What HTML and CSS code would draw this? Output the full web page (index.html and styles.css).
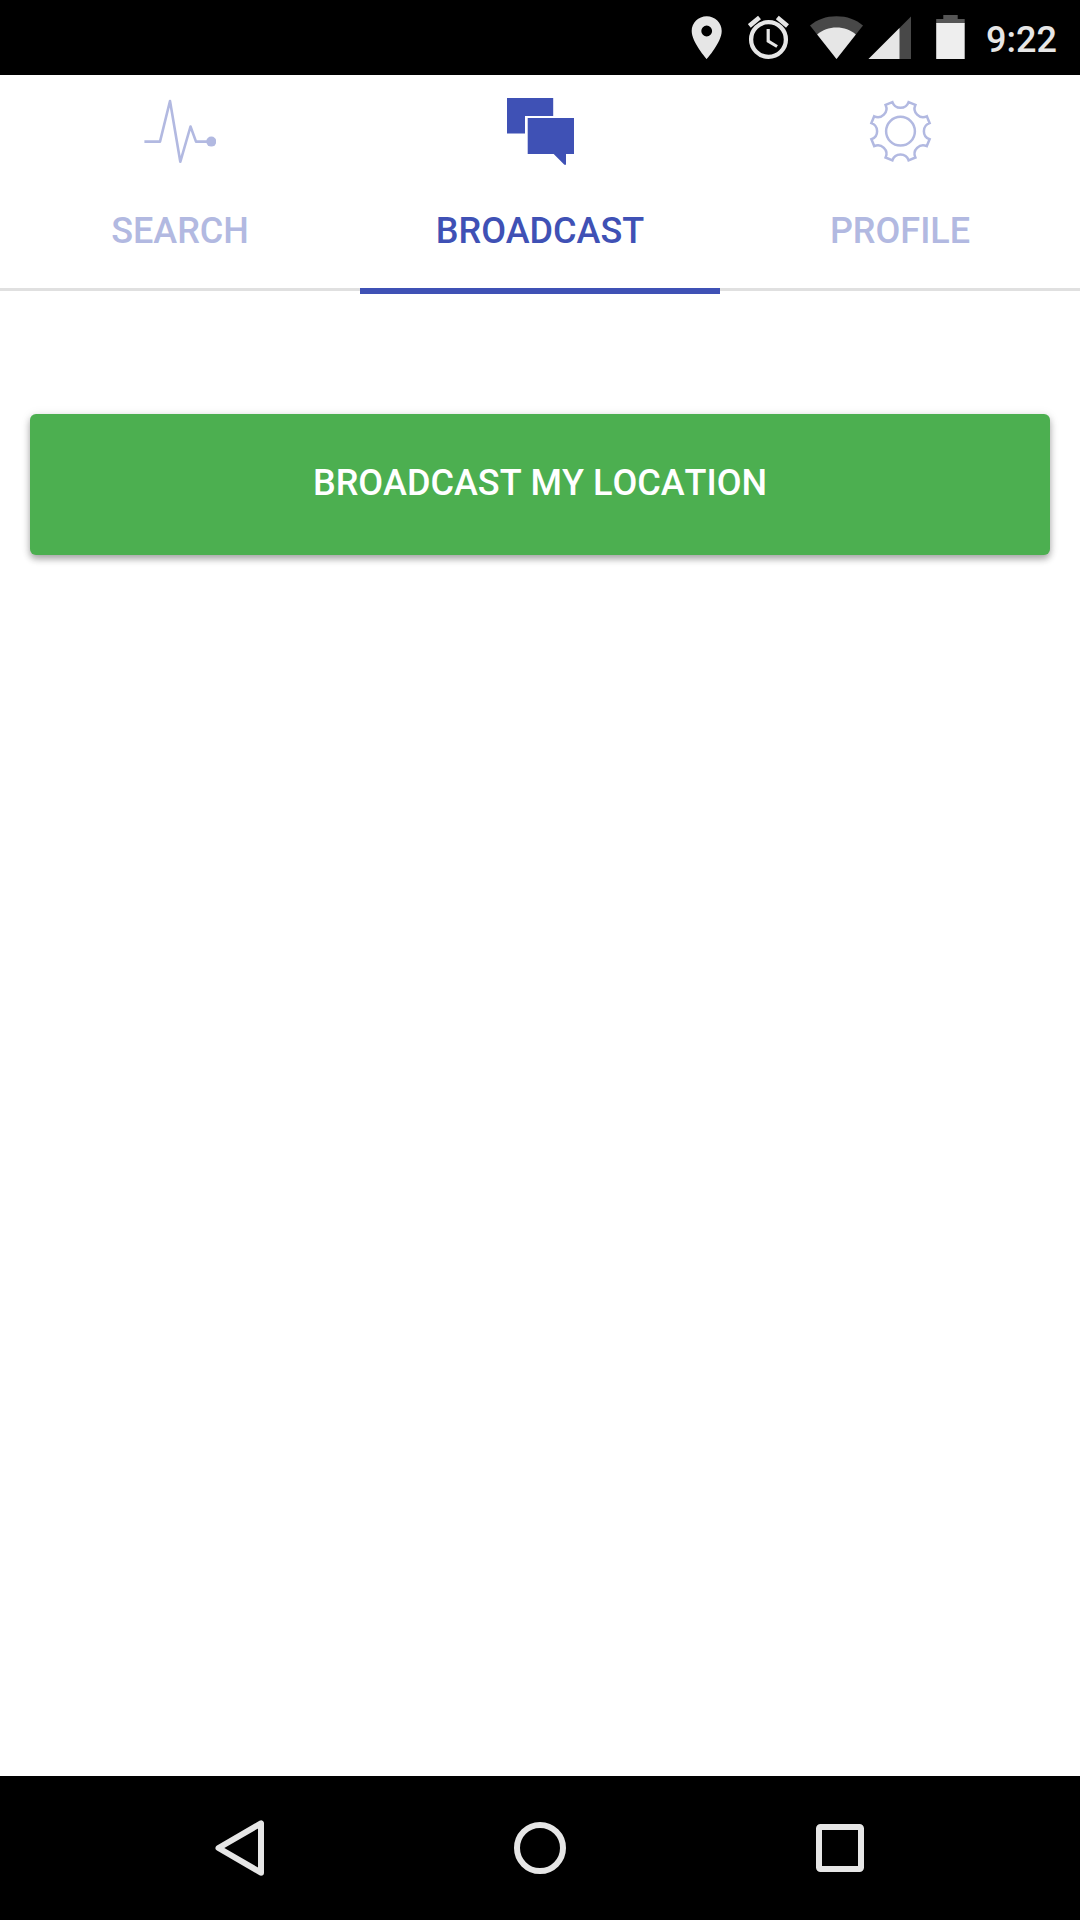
FILE: index.html
```html
<!DOCTYPE html>
<html lang="en">
<head>
    <meta charset="UTF-8">
    <meta name="viewport" content="width=device-width, initial-scale=1.0">
    <title>Broadcast</title>
    <link rel="stylesheet" href="styles.css">
</head>
<body>
    <header class="status-bar">
        <svg class="status-icon location" width="32" height="45" viewBox="0 0 32 45">
            <path fill-rule="evenodd" d="M15.700 1.200C7.400 1.200.7 7.800.7 16c0 11.300 15 28.100 15 28.100s15-16.800 15-28.100c0-8.200-6.700-14.800-15-14.800zM15.700 21.400a5.400 5.400 0 1 1 0-10.800 5.400 5.400 0 0 1 0 10.800z"></path>
        </svg>
        <svg class="status-icon alarm" width="43" height="45" viewBox="0 0 43 45" stroke="#e6e6e6">
            <circle cx="20.500" cy="24.500" r="17.400" stroke-width="4.300"></circle>
            <path d="M20.200 14v12.200l8.900 5.300" stroke-width="3.200"></path>
            <path d="M1.300 10.900l10.200-8.500M29.300 2.400l10.200 8.500" stroke-width="4.600"></path>
        </svg>
        <svg class="status-icon wifi" width="56" height="45" viewBox="0 0 56 45">
            <path class="dim" d="M27.500 44L1 10.600C8 4.500 17 1.200 27.500 1.200S47 4.500 54 10.600z"></path>
            <path d="M27.500 44L8.200 19.500C13.500 15 20 12.600 27.500 12.600S41.500 15 46.800 19.500z"></path>
        </svg>
        <svg class="status-icon signal" width="44" height="45" viewBox="0 0 44 45">
            <path class="dim" d="M.5 44L43 1.500V44z"></path>
            <path d="M.5 44L31.500 13v31z"></path>
        </svg>
        <svg class="status-icon battery" width="30" height="45" viewBox="0 0 30 45">
            <path class="cap" d="M7.300 0h14.400v4h7v4.500H.2V4h7.100z"></path>
            <path class="charge" d="M.2 8h28.500v36H.2z"></path>
        </svg>
        <span class="clock">9:22</span>
    </header>

    <nav class="tabs">
        <a class="tab" href="#">
            <svg class="tab-icon" viewBox="0 0 72 72" fill="none" stroke="currentColor" stroke-width="2.600" stroke-linejoin="round">
                <path d="M.4 46.600H16L26 6 36.300 66.800 46.500 31.500 52 46.600H64"></path>
                <circle cx="67.300" cy="46.600" r="5" fill="currentColor" stroke="none"></circle>
            </svg>
            <span class="tab-label">SEARCH</span>
        </a>
        <a class="tab active" href="#">
            <svg class="tab-icon" viewBox="0 0 72 72" fill="currentColor">
                <path d="M3 3h46.200v18H21v17.500H3z"></path>
                <path d="M23.700 23.100H70V59h-8v10.700h-1.600L49.700 59h-26z"></path>
            </svg>
            <span class="tab-label">BROADCAST</span>
        </a>
        <a class="tab" href="#">
            <svg class="tab-icon" viewBox="-36.500 -36.200 72 72" fill="none" stroke="currentColor" stroke-width="2.500">
                <path d="M-8.100-29.100A8.600 8.600 0 0 0 8.100-29.100L14.900-26.300A8.600 8.600 0 0 0 26.300-14.900L29.100-8.100A8.600 8.600 0 0 0 29.100 8.100L26.300 14.900A8.600 8.600 0 0 0 14.900 26.300L8.100 29.100A8.600 8.600 0 0 0-8.100 29.100L-14.900 26.300A8.600 8.600 0 0 0-26.300 14.900L-29.100 8.100A8.600 8.600 0 0 0-29.100-8.100L-26.300-14.900A8.600 8.600 0 0 0-14.900-26.300z"></path>
                <circle r="14.400"></circle>
            </svg>
            <span class="tab-label">PROFILE</span>
        </a>
    </nav>

    <main class="content">
        <button class="broadcast-button">BROADCAST MY LOCATION</button>
    </main>

    <footer class="nav-bar">
        <svg class="nav-icon" viewBox="0 0 60 60">
            <path d="M51 5.300v49.400L8.500 30z"></path>
        </svg>
        <svg class="nav-icon" viewBox="0 0 60 60">
            <circle cx="30" cy="30" r="23"></circle>
        </svg>
        <svg class="nav-icon" viewBox="0 0 60 60">
            <rect x="9" y="9" width="42" height="42" rx="1.500"></rect>
        </svg>
    </footer>
</body>
</html>
```

FILE: styles.css
```css
* {
    box-sizing: border-box;
}

body {
    font-family: Roboto, 'Noto Sans', sans-serif;
    margin: 0;
    height: 1920px;
    display: flex;
    flex-direction: column;
    background-color: #fff;
}

.status-bar {
    display: flex;
    align-items: center;
    justify-content: flex-end;
    height: 75px;
    padding-right: 23px;
    background-color: #000;
    color: #e6e6e6;
}

.status-icon {
    fill: #e6e6e6;
}

.status-icon .dim {
    fill: #484848;
}

.status-icon .cap {
    fill: #555;
}

.status-icon .charge {
    fill: #eee;
}

.alarm {
    fill: none;
    margin-left: 25px;
}

.wifi {
    margin-left: 18px;
}

.signal {
    margin-left: 3px;
}

.battery {
    margin-left: 24px;
}

.clock {
    width: 71px;
    margin-left: 20px;
    padding-top: 5px;
    font-size: 36px;
    font-weight: 500;
    line-height: 42px;
    white-space: nowrap;
}

.tabs {
    display: flex;
    height: 219px;
}

.tab {
    flex: 1;
    display: flex;
    flex-direction: column;
    align-items: center;
    height: 216px;
    padding-top: 20px;
    border-bottom: 3px solid #e0e0e0;
    color: #b2b9e1;
    text-decoration: none;
}

.tab.active {
    height: 219px;
    border-bottom: 6px solid #3f51b5;
    color: #3f51b5;
}

.tab-icon {
    width: 72px;
    height: 72px;
}

.tab-label {
    margin-top: 43px;
    font-size: 36px;
    font-weight: 500;
    line-height: 42px;
}

.content {
    flex: 1;
    padding: 120px 30px 0;
}

.broadcast-button {
    display: block;
    width: 100%;
    height: 141px;
    padding: 0 0 4px;
    border: none;
    border-radius: 6px;
    background-color: #4caf50;
    box-shadow: 0 4px 7px rgba(0, 0, 0, 0.32), 0 1px 12px rgba(0, 0, 0, 0.08);
    color: #fff;
    font-family: inherit;
    font-size: 36px;
    font-weight: 500;
    font-kerning: none;
}

.nav-bar {
    display: flex;
    align-items: center;
    justify-content: center;
    gap: 240px;
    height: 144px;
    background-color: #000;
}

.nav-icon {
    width: 60px;
    height: 60px;
    fill: none;
    stroke: #e6e6e6;
    stroke-width: 6;
    stroke-linejoin: round;
}
```
